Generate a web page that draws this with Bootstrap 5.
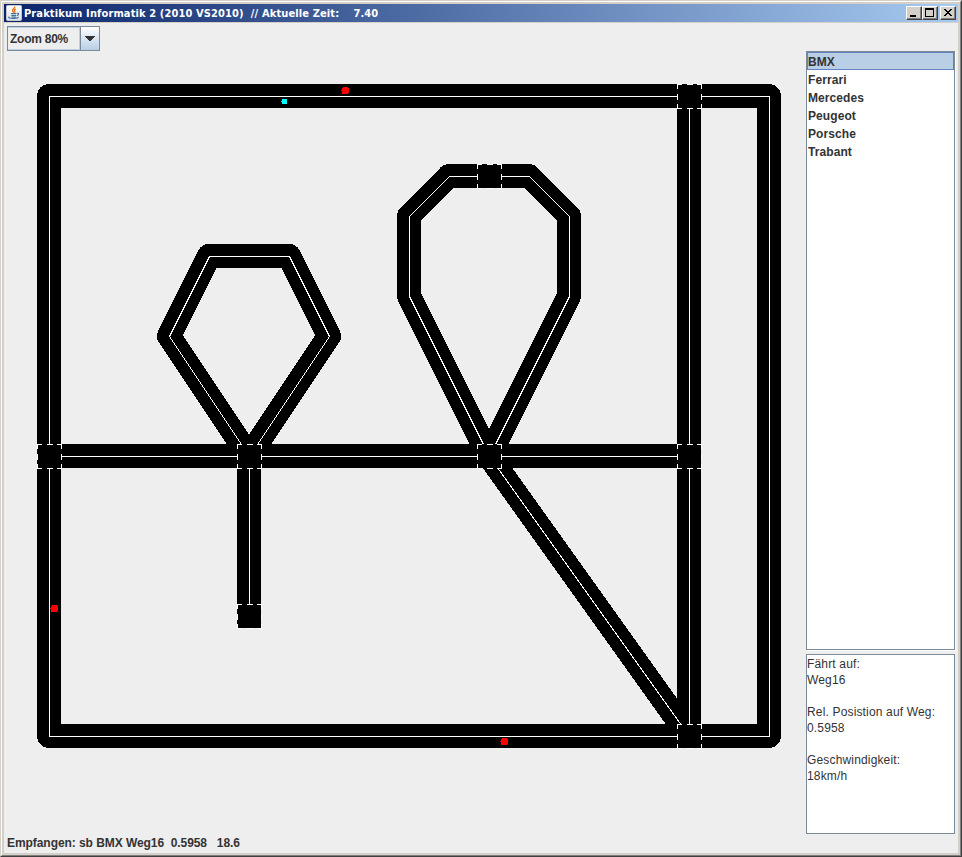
<!DOCTYPE html>
<html lang="de">
<head>
<meta charset="utf-8">
<title>Praktikum Informatik 2</title>
<link href="https://cdn.jsdelivr.net/npm/bootstrap@5.3.0/dist/css/bootstrap.min.css" rel="stylesheet">
<style>
body{margin:0;overflow:hidden;background:#d4d0c8;font:bold 12px/18px "Liberation Sans",Arial,sans-serif;color:#333}
.win{width:962px;height:857px;border:1px solid #d4d0c8;border-right-color:#404040;border-bottom-color:#404040}
.frame{border:1px solid #fff;border-right-color:#808080;border-bottom-color:#808080;padding:2px}
.titlebar{height:18px;background:linear-gradient(90deg,#0a246a,#a6caf0);color:#fff;font:bold 11px/18px "DejaVu Sans Condensed","DejaVu Sans",sans-serif;font-stretch:condensed;padding:0 2px}
.title-text{white-space:pre;margin-left:2px;padding-top:2px;letter-spacing:.12px}
.winbtn{width:16px;height:14px;background:#d4d0c8;border:1px solid;border-color:#fff #404040 #404040 #fff;box-shadow:inset -1px -1px #808080;padding:0;line-height:0}
.winbtn-close{margin-left:2px}
.pane{background:#eee;margin-top:1px;height:830px}
.combo{width:93px;height:25px;margin:3px 0 0 3px;border:1px solid #7a8a99}
.combo-text{width:72px;border:1px solid #b8cfe5;border-left-width:0;line-height:22px;padding-left:2px;letter-spacing:-.25px}
.combo-arrow{width:19px;border-left:1px solid #7a8a99;background:linear-gradient(#fff,#dce8f3 45%,#b8cfe5)}
.map{width:802px;height:782px}
.side{width:149px}
.cars{height:599px;border:1px solid #7a8a99;background:#fff;box-shadow:1px 1px #fff;border-radius:0}
.cars .list-group-item{border:1px solid transparent;border-radius:0;height:18px;padding:1px 0 0;line-height:17px;color:#333;background:none;margin:0;letter-spacing:.08px}
.cars .list-group-item.active{background:#b8cfe5;border-color:#6382bf}
.info{height:180px;margin-top:4px;padding-top:1px;border:1px solid #7a8a99;background:#fff;font-weight:normal;line-height:16px;white-space:pre;letter-spacing:.16px}
.status{white-space:pre;padding-left:3px;line-height:18px;letter-spacing:-.06px}
</style>
<script src="https://cdn.jsdelivr.net/npm/bootstrap@5.3.0/dist/js/bootstrap.bundle.min.js"></script>
</head>
<body>
<div class="win"><div class="frame h-100">
  <header class="titlebar d-flex align-items-center">
    <svg width="16" height="16" viewBox="0 0 16 16"><defs><linearGradient id="ic" x2="0" y2="1"><stop stop-color="#fff"/><stop offset="1" stop-color="#dde1e5"/></linearGradient></defs><rect x=".5" y=".5" width="15" height="15" rx="1" fill="url(#ic)" stroke="#c3c8cd"/><path d="M8.800 1.500c.6 2-3.200 2.700-2.200 4.500.3.600 1 1 1 1.700M10 4c-1.500.6-2.200 1.300-1.300 2.200.5.500.2 1-.3 1.400" fill="none" stroke="#e76f18" stroke-width="1.300"/><path d="M5 8.500h5.500M5.300 10.300h4.900M11 8.300c2-.5 2.200 1.500 0 2.300M3.300 11.800c-2 1 1.500 1.600 4.600 1.500 3 0 4.800-.6 4.300-1.400M5.500 12h4.300" fill="none" stroke="#3f7399" stroke-width="1.150"/></svg>
    <div class="title-text flex-grow-1">Praktikum Informatik 2 (2010 VS2010)  // Aktuelle Zeit:    7.40</div>
    <button class="winbtn" aria-label="Minimieren"><svg width="14" height="12" shape-rendering="crispEdges"><path d="M3 8h6v2H3z"/></svg></button>
    <button class="winbtn" aria-label="Maximieren"><svg width="14" height="12" shape-rendering="crispEdges"><path d="M2 1h9v9H2zM3 3v6h7V3z" fill-rule="evenodd"/></svg></button>
    <button class="winbtn winbtn-close" aria-label="Schließen"><svg width="14" height="12" shape-rendering="crispEdges"><path d="M3 2h2v1h1v1h2V3h1V2h2v1h-1v1H9v1H8v1h1v1h1v1h1v1H9V8H8V7H6v1H5v1H3V8h1V7h1V6h1V5H5V4H4V3H3z"/></svg></button>
  </header>
  <main class="pane d-flex flex-column">
    <div class="combo d-flex flex-shrink-0"><div class="combo-text">Zoom 80%</div><div class="combo-arrow d-flex align-items-center justify-content-center"><svg width="10" height="5" shape-rendering="crispEdges"><path d="M0 0h10v1H9v1H8v1H7v1H6v1H4V4H3V3H2V2H1V1H0z" fill="#333"/></svg></div></div>
    <div class="d-flex">
      <svg class="map flex-shrink-0" viewBox="4 51 802 782" shape-rendering="crispEdges">
        <defs>
          <path id="roads" d="M49 96H769V736H49ZM49 456H689M689 96V736M249 456V616M249 456L169 336L209 256H289L329 336ZM489 456L409 296V216L449 176H529L569 216V296ZM489 456L689 736"/>
          <g id="node"><path d="M-12-12h24v24h-24z"/><path d="M-12-11.500h25M-12 12.500h25M-11.500-12v25M12.500-12v25" fill="none" stroke="#fff" stroke-dasharray="5 4.500 6 4.500 5"/></g>
        </defs>
        <use href="#roads" fill="none" stroke="#000" stroke-width="24" stroke-linejoin="round"/>
        <use href="#roads" x=".5" y=".5" fill="none" stroke="#fff"/>
        <use href="#node" x="49" y="456"/><use href="#node" x="249" y="456"/><use href="#node" x="489" y="456"/><use href="#node" x="689" y="456"/><use href="#node" x="689" y="96"/><use href="#node" x="689" y="736"/><use href="#node" x="489" y="176"/><use href="#node" x="249" y="616"/>
        <g fill="red"><circle cx="345.500" cy="90.500" r="4"/><circle cx="54.500" cy="608.500" r="4"/><circle cx="504.500" cy="741.500" r="4"/></g>
        <path d="M282 99h5v5h-5v-2h-1v-1h1z" fill="#0ff"/>
      </svg>
      <aside class="side">
        <div class="cars list-group">
          <div class="list-group-item active">BMX</div><div class="list-group-item">Ferrari</div><div class="list-group-item">Mercedes</div><div class="list-group-item">Peugeot</div><div class="list-group-item">Porsche</div><div class="list-group-item">Trabant</div>
        </div>
        <div class="info">Fährt auf:
Weg16

Rel. Posistion auf Weg:
0.5958

Geschwindigkeit:
18km/h</div>
      </aside>
    </div>
    <footer class="status">Empfangen: sb BMX Weg16  0.5958   18.6</footer>
  </main>
</div></div>
</body>
</html>
